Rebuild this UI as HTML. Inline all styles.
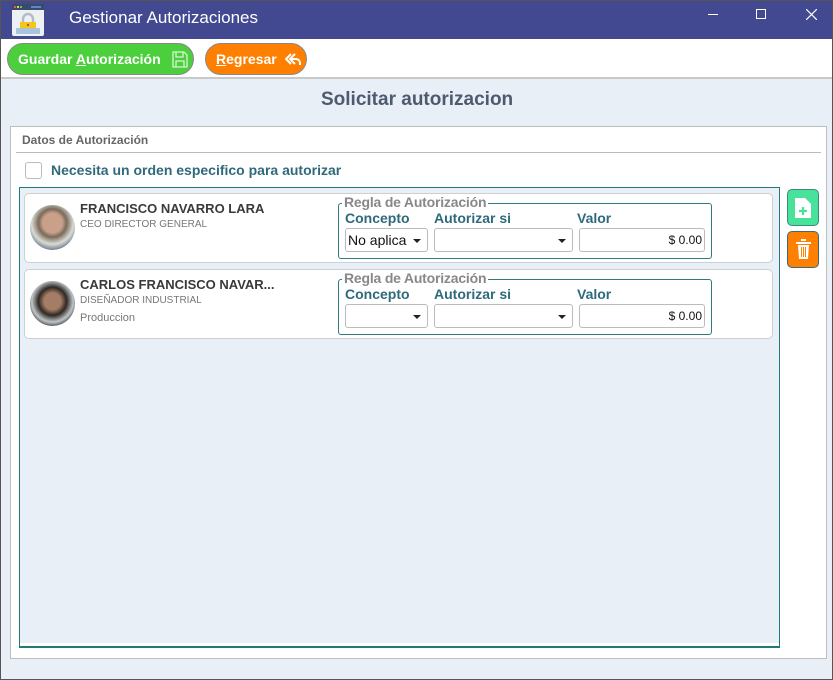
<!DOCTYPE html>
<html><head><meta charset="utf-8"><style>
*{box-sizing:border-box;margin:0;padding:0}
body{width:833px;height:680px;position:relative;overflow:hidden;font-family:"Liberation Sans",Arial,sans-serif;background:#e9eff6}
.a{position:absolute}
.win{left:0;top:0;width:833px;height:680px;border:1px solid #555;}
.title{left:0;top:0;width:833px;height:39px;background:#434990;border:1px solid #555;border-bottom:none}
.tb{left:1px;top:39px;width:831px;height:40px;background:#fff;border-bottom:2px solid #c9c9c9}
.btn{border-radius:16px;border:1px solid #888;color:#fff;font-weight:bold;font-size:14px;line-height:31px;padding-left:10px}
.card{background:#fff;border:1px solid #cfcfcf;border-radius:5px;left:24px;width:749px;height:70px}
.name{font-weight:bold;font-size:13px;color:#3a3a3a}
.sub{font-size:10px;color:#777}
.fs{border:1px solid #2f7b7d;border-radius:3px;width:374px;height:56px}
.leg{font-size:14px;color:#888;background:#fff;padding:0 2px;font-weight:bold;letter-spacing:-.2px}
.lbl{font-size:14px;font-weight:bold;color:#2e6a7b}
.sel{background:#fff;border:1px solid #bbb;border-radius:3px;height:24px;font-size:14px;color:#111;line-height:22px;padding-left:2px}
.dd:after{content:"";position:absolute;right:6px;top:10px;border-left:4px solid transparent;border-right:4px solid transparent;border-top:4px solid #222}
.val{text-align:right;padding-right:2px;font-size:12px}
.av{border-radius:50%;width:45px;height:45px;left:30px}
</style></head><body>
<div class="a title"></div>
<svg class="a" style="left:11px;top:4px" width="34" height="32" viewBox="0 0 34 32">
<rect x="1" y="0" width="32" height="32" rx="2" fill="#eef1f3"/>
<rect x="1" y="0" width="32" height="6" fill="#3a4a6e"/>
<rect x="3" y="2" width="2" height="2" fill="#e55"/><rect x="6" y="2" width="2" height="2" fill="#fc3"/><rect x="9" y="2" width="2" height="2" fill="#5c5"/>
<rect x="20" y="2" width="10" height="2" fill="#5a8ac0"/>
<path d="M12 19v-4a5 5 0 0 1 10 0v4" fill="none" stroke="#b5bcc4" stroke-width="2.5"/>
<rect x="9" y="18" width="16" height="8" fill="#f5c518"/>
<rect x="5" y="24" width="24" height="6" rx="1" fill="#a9c4d9"/>
<circle cx="17" cy="21" r="1.2" fill="#a55"/>
</svg>
<div class="a" style="left:69px;top:8px;color:#fff;font-size:17px">Gestionar Autorizaciones</div>
<div class="a" style="left:708px;top:14px;width:10px;height:1px;background:#fff"></div>
<div class="a" style="left:756px;top:9px;width:10px;height:10px;border:1px solid #fff"></div>
<svg class="a" style="left:806px;top:9px" width="11" height="11"><path d="M0 0L11 11M11 0L0 11" stroke="#fff" stroke-width="1.2"/></svg>
<div class="a tb"></div>
<div class="a btn" style="left:7px;top:43px;width:187px;height:32px;background:#4bcf3c">Guardar <u>A</u>utorización
<svg class="a" style="left:164px;top:7px" width="16" height="17" viewBox="0 0 16 17"><path d="M1 1h11l3 3v12H1z M4 1v5h7V1 M4 16v-6h8v6" fill="none" stroke="#d8f5d4" stroke-width="1.3"/></svg></div>
<div class="a btn" style="left:205px;top:43px;width:102px;height:32px;background:#ff7f00"><u>R</u>egresar
<svg class="a" style="left:79px;top:9px" width="16" height="13" viewBox="0 0 16 13"><path d="M6 1L1 6l5 5M10 1L5 6l5 5" fill="none" stroke="#fff" stroke-width="2"/><path d="M6 6h5a4 4 0 0 1 4 4v2" fill="none" stroke="#fff" stroke-width="2"/></svg></div>
<div class="a" style="left:321px;top:89px;font-size:19px;font-weight:bold;color:#4e5a6f">Solicitar autorizacion</div>
<div class="a" style="left:10px;top:126px;width:817px;height:533px;background:#fff;border:1px solid #bdbdbd"></div>
<div class="a" style="left:22px;top:133px;font-size:12px;font-weight:bold;color:#666">Datos de Autorización</div>
<div class="a" style="left:16px;top:152px;width:805px;height:1px;background:#bbb"></div>
<div class="a" style="left:25px;top:162px;width:17px;height:17px;border:1px solid #bbb;border-radius:3px"></div>
<div class="a" style="left:51px;top:162px;font-size:14px;font-weight:bold;color:#2f6a7a">Necesita un orden especifico para autorizar</div>
<div class="a" style="left:19px;top:187px;width:761px;height:461px;border:1px solid #1f7a78;background:#e9eff6;border-bottom:2px solid #1f7a78"></div>
<div class="a" style="left:20px;top:643px;width:759px;height:3px;background:#fff"></div>

<div class="a card" style="top:193px"></div>
<div class="a av" style="top:205px;background:radial-gradient(circle at 50% 40%,#c9a08a 0 28%,#7a6a5a 40%,#d9dcd5 60%,#5f6e85 80%)"></div>
<div class="a name" style="left:80px;top:201px">FRANCISCO NAVARRO LARA</div>
<div class="a sub" style="left:80px;top:219px">CEO DIRECTOR GENERAL</div>
<div class="a fs" style="left:338px;top:203px"></div>
<div class="a leg" style="left:342px;top:194px">Regla de Autorización</div>
<div class="a lbl" style="left:345px;top:210px">Concepto</div>
<div class="a lbl" style="left:434px;top:210px">Autorizar si</div>
<div class="a lbl" style="left:577px;top:210px">Valor</div>
<div class="a sel dd" style="left:345px;top:228px;width:83px">No aplica</div>
<div class="a sel dd" style="left:434px;top:228px;width:139px"></div>
<div class="a sel val" style="left:579px;top:228px;width:126px">$ 0.00</div>

<div class="a card" style="top:269px"></div>
<div class="a av" style="top:281px;background:radial-gradient(circle at 50% 45%,#a57d66 0 25%,#2f2824 42%,#bfc5c8 62%,#2a2a2a 80%)"></div>
<div class="a name" style="left:80px;top:277px">CARLOS FRANCISCO NAVAR...</div>
<div class="a sub" style="left:80px;top:295px">DISEÑADOR INDUSTRIAL</div>
<div class="a" style="left:80px;top:312px;font-size:11px;color:#777">Produccion</div>
<div class="a fs" style="left:338px;top:279px"></div>
<div class="a leg" style="left:342px;top:270px">Regla de Autorización</div>
<div class="a lbl" style="left:345px;top:286px">Concepto</div>
<div class="a lbl" style="left:434px;top:286px">Autorizar si</div>
<div class="a lbl" style="left:577px;top:286px">Valor</div>
<div class="a sel dd" style="left:345px;top:304px;width:83px"></div>
<div class="a sel dd" style="left:434px;top:304px;width:139px"></div>
<div class="a sel val" style="left:579px;top:304px;width:126px">$ 0.00</div>

<div class="a" style="left:787px;top:189px;width:32px;height:37px;background:#48e29a;border:1px solid #3a8a80;border-radius:5px">
<svg class="a" style="left:7px;top:8px" width="16" height="20" viewBox="0 0 16 20"><path d="M0 0h10l6 6v14H0z" fill="#fff"/><path d="M8 9v8M4 13h8" stroke="#48e29a" stroke-width="2.2"/></svg></div>
<div class="a" style="left:787px;top:231px;width:32px;height:37px;background:#ff7f00;border:1px solid #3a6a80;border-radius:5px">
<svg class="a" style="left:7px;top:7px" width="17" height="21" viewBox="0 0 17 21"><path d="M6 1h5M1 4h15" stroke="#fff" stroke-width="2"/><path d="M3 6h11l-1 14H4z" fill="#fff"/><path d="M6.5 8v10M8.5 8v10M10.5 8v10" stroke="#ff7f00" stroke-width="1"/></svg></div>
<div class="a win"></div>
</body></html>
